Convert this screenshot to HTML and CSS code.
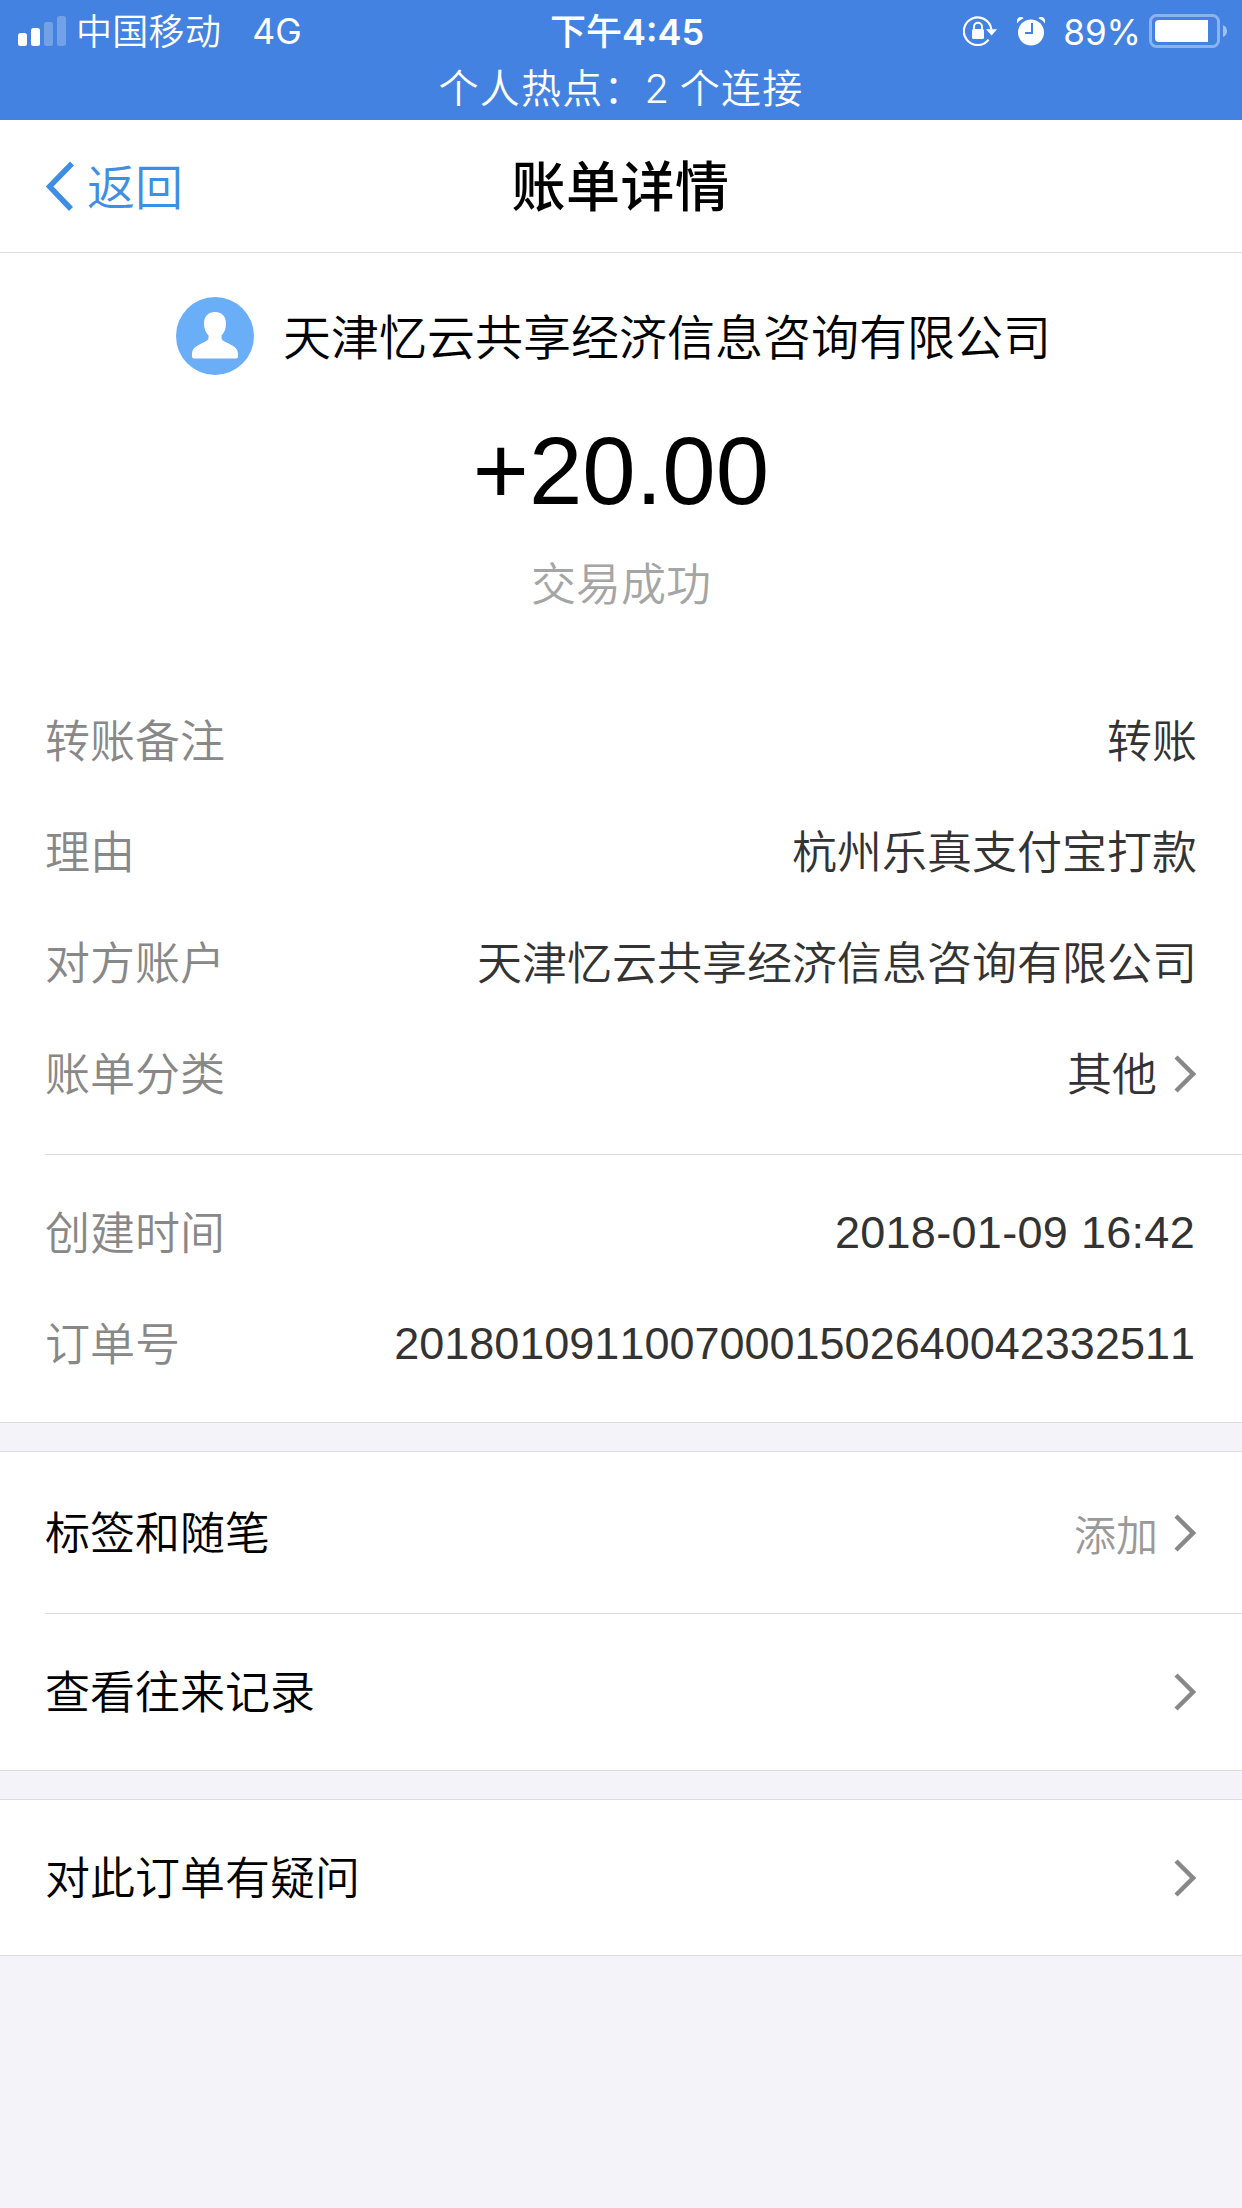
FILE: index.html
```html
<!DOCTYPE html>
<html lang="zh-CN">

<head>
   <meta charset="UTF-8">
   <meta name="viewport" content="width=device-width, initial-scale=1.0">
   <title>账单详情</title>
   <link rel="stylesheet" href="styles.css">
</head>

<body>
   <div class="status-bar">
      <div class="status-row">
         <div class="status-left">
            <svg class="signal" width="48" height="30" viewBox="0 0 48 30" fill="#fff">
               <rect x="0" y="17" width="9" height="13" rx="2.5"/>
               <rect x="13" y="12" width="9" height="18" rx="2.5"/>
               <rect x="26" y="6" width="9" height="24" rx="2.5" opacity=".25"/>
               <rect x="39" y="0" width="9" height="30" rx="2.5" opacity=".25"/>
            </svg>
            <span class="carrier">中国移动</span>
            <span class="network">4G</span>
         </div>
         <div class="status-time">下午<b>4:45</b></div>
         <div class="status-right">
            <svg class="lock-icon" width="34" height="30" viewBox="0 0 34 30">
               <path d="M25.6 23.6A13.8 13.8 0 1 1 28.3 13.5" fill="none" stroke="#fff" stroke-width="2.2"/>
               <path d="M23 13.2h11l-5.4 6.4z" fill="#fff"/>
               <rect x="9" y="13" width="12" height="10" rx="1.5" fill="#fff"/>
               <path d="M11 14v-3.2a4 4 0 0 1 8 0V14" fill="none" stroke="#fff" stroke-width="2"/>
            </svg>
            <svg class="alarm-icon" width="28" height="29" viewBox="0 0 28 29">
               <circle cx="14" cy="15.5" r="13" fill="#fff"/>
               <path d="M0 6.6V4Q0 0 4 0Q6 0 6.5 1.2Q2.5 3 0 6.6zM28 6.6V4Q28 0 24 0Q22 0 21.5 1.2Q25.5 3 28 6.6z" fill="#fff"/>
               <path d="M15 6v10H8" fill="none" stroke="#4482e1" stroke-width="2"/>
            </svg>
            <span class="percent">89%</span>
            <svg class="battery" width="78" height="34" viewBox="0 0 78 34">
               <rect x="1.5" y="1.5" width="68" height="31" rx="6" fill="none" stroke="#8cb3ed" stroke-width="3"/>
               <path d="M10 6h49v22H10a4 4 0 0 1-4-4V10a4 4 0 0 1 4-4z" fill="#fff"/>
               <path d="M74 11q4 2 4 6t-4 6z" fill="#a1c0f0"/>
            </svg>
         </div>
      </div>
      <div class="hotspot">个人热点：2 个连接</div>
   </div>

   <div class="nav">
      <a class="back">
         <svg width="28" height="50" viewBox="0 0 28 50">
            <path d="M26 2.5L3.5 25.5L25 48" fill="none" stroke="#3e8ee4" stroke-width="5.5"/>
         </svg>
         <span>返回</span>
      </a>
      <h1 class="title">账单详情</h1>
   </div>

   <div class="card bill">
      <div class="payee">
         <svg class="avatar" width="78" height="78" viewBox="0 0 78 78">
            <circle cx="39" cy="39" r="39" fill="#6aaef7"/>
            <path d="M39 15c7 0 11 4.5 11 11.5c0 5-1.5 9-4.5 12v2.5c0 2 2 3 5 4.5c6 3 11.5 5 11.5 11.5v2.5q0 2-2 2H18q-2 0-2-2V57c0-6.5 5.5-8.5 11.5-11.5c3-1.5 5-2.5 5-4.5v-2.5c-3-3-4.5-7-4.5-12C28 19.5 32 15 39 15z" fill="#fff"/>
         </svg>
         <span class="payee-name">天津忆云共享经济信息咨询有限公司</span>
      </div>
      <p class="amount">+20.00</p>
      <p class="result">交易成功</p>

      <div class="details">
         <div class="row"><span class="label">转账备注</span><span class="value">转账</span></div>
         <div class="row"><span class="label">理由</span><span class="value">杭州乐真支付宝打款</span></div>
         <div class="row"><span class="label">对方账户</span><span class="value">天津忆云共享经济信息咨询有限公司</span></div>
         <div class="row">
            <span class="label">账单分类</span><span class="value">其他</span>
            <svg class="arrow" width="22" height="38" viewBox="0 0 22 38"><path d="M2 2L19 19L2 36"/></svg>
         </div>
      </div>
      <div class="details order">
         <div class="row"><span class="label">创建时间</span><span class="value number date">2018-01-09 16:42</span></div>
         <div class="row"><span class="label">订单号</span><span class="value number">20180109110070001502640042332511</span></div>
      </div>
   </div>

   <div class="card menu">
      <div class="menu-item tall">
         <span class="name">标签和随笔</span><span class="hint">添加</span>
         <svg class="arrow" width="22" height="38" viewBox="0 0 22 38"><path d="M2 2L19 19L2 36"/></svg>
      </div>
      <div class="menu-item">
         <span class="name">查看往来记录</span>
         <svg class="arrow" width="22" height="38" viewBox="0 0 22 38"><path d="M2 2L19 19L2 36"/></svg>
      </div>
   </div>

   <div class="card menu">
      <div class="menu-item short">
         <span class="name">对此订单有疑问</span>
         <svg class="arrow" width="22" height="38" viewBox="0 0 22 38"><path d="M2 2L19 19L2 36"/></svg>
      </div>
   </div>
</body>

</html>
```
FILE: styles.css
```css
* {
   box-sizing: border-box;
}

body {
   margin: 0;
   background-color: #f4f3f9;
   color: black;
   font-family: "Liberation Sans", "Noto Sans CJK SC", sans-serif;
   font-size: 45px;
   font-weight: 350;
   font-kerning: none;
}

svg {
   display: block;
   flex-shrink: 0;
}

/* status bar */
.status-bar {
   height: 120px;
   background-color: #4482e1;
   color: white;
   font-family: Inter, "Noto Sans CJK SC", sans-serif;
   font-size: 36px;
}

.status-row {
   display: grid;
   grid-template-columns: 1fr auto 1fr;
   align-items: center;
   height: 60px;
   line-height: 60px;
}

.status-left,
.status-right {
   display: flex;
   align-items: center;
}

.status-left {
   padding-left: 18px;
}

.carrier {
   padding-top: 2px;
   margin-left: 10px;
   letter-spacing: 0.3px;
}

.network {
   padding-top: 2px;
   margin-left: 31px;
   font-size: 35.5px;
   font-weight: 400;
}

.status-time {
   padding: 2px 0 0 12px;
   font-weight: 500;
}

.status-time b {
   font-size: 36px;
   font-weight: 600;
}

.status-right {
   justify-content: flex-end;
   padding-right: 15px;
}

.alarm-icon {
   margin-left: 20px;
}

.percent {
   padding-top: 2px;
   margin-left: 18px;
   font-size: 35px;
   font-weight: 400;
}

.battery {
   margin-left: 8px;
}

.hotspot {
   height: 58px;
   line-height: 58px;
   text-align: center;
   font-size: 40px;
   letter-spacing: 1.2px;
   word-spacing: -3px;
}

/* title bar */
.nav {
   display: grid;
   grid-template-columns: 1fr auto 1fr;
   align-items: center;
   height: 133px;
   background-color: white;
   border-bottom: 1px solid #dcdcde;
}

.back {
   display: flex;
   align-items: center;
   gap: 13px;
   padding-left: 46px;
   color: #3e8ee4;
   font-size: 48px;
}

.back span {
   padding-bottom: 5px;
}

.title {
   margin: 0;
   padding: 0 1px 6px 0;
   font-size: 54px;
   font-weight: 500;
   letter-spacing: 0.5px;
}

.card {
   background-color: white;
   border-bottom: 1px solid #dcdbe0;
}

/* bill */
.bill {
   height: 1170px;
   padding-top: 44px;
}

.payee {
   display: flex;
   justify-content: center;
   align-items: center;
   gap: 29px;
   height: 78px;
   padding-right: 15px;
   font-size: 48px;
}

.payee-name {
   padding-bottom: 5px;
}

.amount {
   margin: 41px 0 0;
   height: 110px;
   line-height: 110px;
   text-align: center;
   font-size: 96px;
}

.result {
   margin: 30px 0 0;
   height: 60px;
   line-height: 60px;
   text-align: center;
   color: #a5a5a5;
}

.details {
   padding: 69px 45px 0 0;
   margin-left: 45px;
   height: 539px;
   border-bottom: 1px solid #dcdcdc;
}

.details.order {
   padding-top: 22px;
   height: auto;
   border-bottom: none;
}

.row {
   display: flex;
   align-items: center;
   height: 111px;
}

.label {
   padding-bottom: 5px;
   color: #888;
}

.value {
   padding-bottom: 5px;
   margin-left: auto;
   color: #333;
}

.value.number {
   padding: 0 2px 0 0;
}

.value.date {
   letter-spacing: 0.3px;
}

.arrow {
   margin-left: 17px;
   margin-right: 1px;
   fill: none;
   stroke: #888;
   stroke-width: 4.5px;
}

/* menu */
.menu {
   margin-top: 28px;
   border-top: 1px solid #dcdbe0;
   padding-left: 45px;
}

.menu-item {
   display: flex;
   justify-content: space-between;
   align-items: center;
   height: 156px;
   padding-right: 45px;
}

.menu-item.tall {
   height: 162px;
   border-bottom: 1px solid #dcdcdc;
}

.menu-item.short {
   height: 155px;
}

.name {
   padding-bottom: 5px;
}

.hint {
   margin-left: auto;
   margin-right: -1px;
   color: #999;
   font-size: 42px;
}
```
